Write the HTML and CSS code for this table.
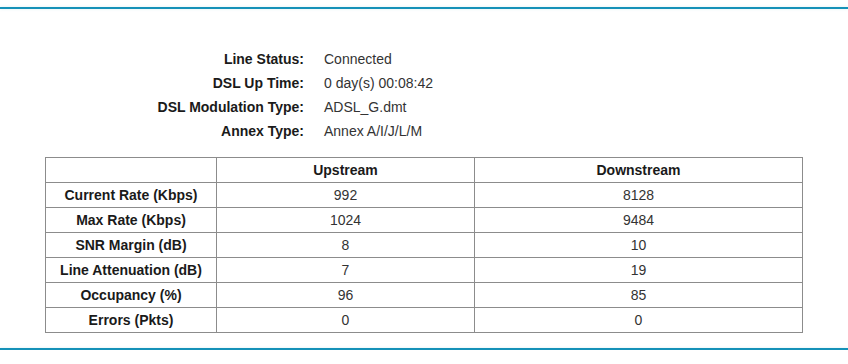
FILE: index.html
```html
<!DOCTYPE html>
<html>
<head>
<meta charset="utf-8">
<link rel="stylesheet" href="styles.css">
</head>
<body>
<div class="page">
  <div class="rule top"></div>
  <div class="content">
    <div class="info">
      <div class="label">Line Status:</div><div class="value">Connected</div>
      <div class="label">DSL Up Time:</div><div class="value">0 day(s) 00:08:42</div>
      <div class="label">DSL Modulation Type:</div><div class="value">ADSL_G.dmt</div>
      <div class="label">Annex Type:</div><div class="value">Annex A/I/J/L/M</div>
    </div>
    <table class="stats">
      <colgroup><col class="c1"><col class="c2"><col class="c3"></colgroup>
      <tr><th></th><th>Upstream</th><th>Downstream</th></tr>
      <tr><th>Current Rate (Kbps)</th><td>992</td><td>8128</td></tr>
      <tr><th>Max Rate (Kbps)</th><td>1024</td><td>9484</td></tr>
      <tr><th>SNR Margin (dB)</th><td>8</td><td>10</td></tr>
      <tr><th>Line Attenuation (dB)</th><td>7</td><td>19</td></tr>
      <tr><th>Occupancy (%)</th><td>96</td><td>85</td></tr>
      <tr><th>Errors (Pkts)</th><td>0</td><td>0</td></tr>
    </table>
  </div>
  <div class="rule bottom"></div>
</div>
</body>
</html>
```
FILE: styles.css
```css
html, body {
  margin: 0;
  padding: 0;
  background: #fff;
}
body {
  font-family: "Liberation Sans", Arial, sans-serif;
  font-size: 14px;
  color: #333;
}
.page {
  padding-top: 7px;
}
.rule {
  height: 2px;
  background: #1591b8;
  box-shadow: 0 0 3px rgba(21, 145, 184, 0.15);
}
.content {
  padding-top: 38px;
  padding-bottom: 15px;
}
.info {
  display: grid;
  grid-template-columns: 304px auto;
  column-gap: 20px;
  grid-auto-rows: 24px;
  align-items: center;
}
.label {
  text-align: right;
  font-weight: bold;
  color: #1a1a1a;
}
.value {
  color: #333;
}
.stats {
  margin-top: 14px;
  margin-left: 45px;
  border-collapse: collapse;
  table-layout: fixed;
  width: 757px;
}
.c1 { width: 171px; }
.c2 { width: 258px; }
.c3 { width: 328px; }
.stats th, .stats td {
  border: 1px solid #8c8c8c;
  height: 24px;
  padding: 0;
  text-align: center;
  vertical-align: middle;
}
.stats th {
  font-weight: bold;
  color: #1a1a1a;
}
.stats td {
  color: #333;
}
```
